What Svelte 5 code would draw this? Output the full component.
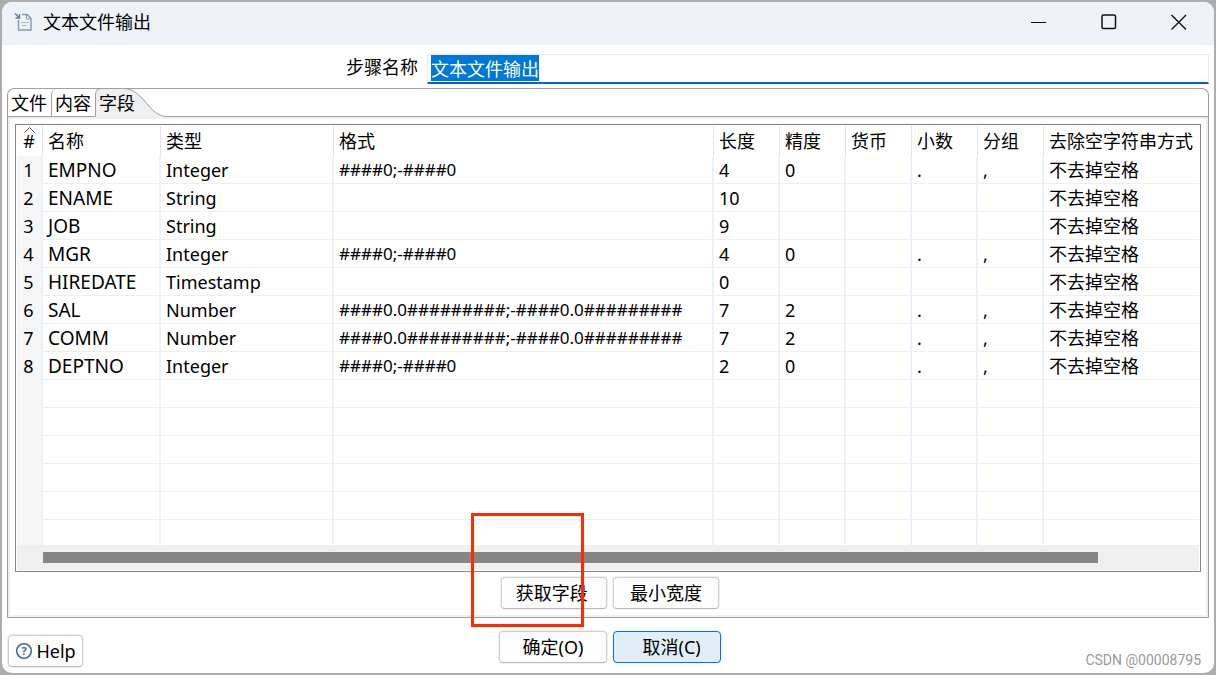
<script>
import { onMount } from 'svelte';

let stepName = '文本文件输出';
let stepInput;
let activeTab = '字段';

const tabs = ['文件', '内容', '字段'];
const columns = ['名称', '类型', '格式', '长度', '精度', '货币', '小数', '分组', '去除空字符串方式'];

const plain = '####0;-####0';
const decimal = '####0.0#########;-####0.0#########';
const keep = '不去掉空格';

let fields = [
  { name: 'EMPNO', type: 'Integer', format: plain, length: 4, precision: '0', dec: '.', group: ',', trim: keep },
  { name: 'ENAME', type: 'String', format: '', length: 10, precision: '', dec: '', group: '', trim: keep },
  { name: 'JOB', type: 'String', format: '', length: 9, precision: '', dec: '', group: '', trim: keep },
  { name: 'MGR', type: 'Integer', format: plain, length: 4, precision: '0', dec: '.', group: ',', trim: keep },
  { name: 'HIREDATE', type: 'Timestamp', format: '', length: 0, precision: '', dec: '', group: '', trim: keep },
  { name: 'SAL', type: 'Number', format: decimal, length: 7, precision: '2', dec: '.', group: ',', trim: keep },
  { name: 'COMM', type: 'Number', format: decimal, length: 7, precision: '2', dec: '.', group: ',', trim: keep },
  { name: 'DEPTNO', type: 'Integer', format: plain, length: 2, precision: '0', dec: '.', group: ',', trim: keep }
];

// blank grid lines under the data
const blankRows = [1, 2, 3, 4, 5, 6];

onMount(() => {
  stepInput.focus();
  stepInput.select();
});
</script>

<main class="dialog">
  <header class="titlebar">
    <svg class="app-icon" width="18" height="20" viewBox="0 0 18 20" fill="none">
      <path d="M1 1.5l4 4M5.5 2v4h-4" stroke="#5a7f9c" stroke-width="1.4" />
      <path d="M8 2.5h5l4 4v11.500h-12.500v-10" stroke="#7d9bb3" stroke-width="1.400" />
      <path d="M12.500 2.500v4.500h4.500" stroke="#7d9bb3" />
      <path d="M7.500 10.500h7M7.500 13.500h5" stroke="#a3b9ca" />
    </svg>
    <h1>文本文件输出</h1>
    <div class="window-buttons">
      <button aria-label="最小化"><svg width="16" height="16" viewBox="0 0 16 16"><path d="M0 8.500h15" /></svg></button>
      <button aria-label="最大化"><svg width="16" height="16" viewBox="0 0 16 16"><rect x="1" y="1" width="13.500" height="13.500" rx="1.500" stroke-width="1.500" /></svg></button>
      <button aria-label="关闭"><svg width="16" height="16" viewBox="0 0 16 16"><path d="M.5 1l14.500 14.500M15 1L.5 15.500" stroke-width="1.400" /></svg></button>
    </div>
  </header>

  <div class="step">
    <label for="step-name">步骤名称</label>
    <input id="step-name" type="text" bind:this={stepInput} bind:value={stepName}>
  </div>

  <section class="folder">
    <div class="tabs" role="tablist">
      {#each tabs as tab}
        <button class="tab" class:active={tab === activeTab} role="tab" aria-selected={tab === activeTab} on:click={() => activeTab = tab}>
          {#if tab === activeTab}
            <svg class="tab-shape" width="72" height="29" viewBox="0 0 72 29">
              <path d="M.5 29V6.500Q.5 .5 6.500 .5H28C40 .5 46 9 53 17C60 25 64 27.500 71 28.500V29Z" fill="#efefef" />
              <path d="M.5 28V6.500Q.5 .5 6.500 .5H28C40 .5 46 9 53 17C60 25 64 27.500 71 28.500" fill="none" stroke="#a0a0a0" />
            </svg>
          {/if}
          <span>{tab}</span>
        </button>
      {/each}
    </div>

    <div class="panel">
      <div class="panel-body">
        <div class="grid-frame">
          <table>
            <colgroup>
              <col class="c-num"><col class="c-name"><col class="c-type"><col class="c-format">
              <col class="c-small"><col class="c-small"><col class="c-small"><col class="c-small"><col class="c-small">
              <col>
            </colgroup>
            <thead>
              <tr>
                <th class="num">
                  <svg class="sort" width="11" height="6" viewBox="0 0 11 6"><path d="M.5 5.500l5-5 5 5" fill="none" stroke="#555" /></svg>
                  #
                </th>
                {#each columns as column}
                  <th>{column}</th>
                {/each}
              </tr>
            </thead>
            <tbody>
              {#each fields as field, i}
                <tr>
                  <td class="num">{i + 1}</td>
                  <td class="name">{field.name}</td>
                  <td>{field.type}</td>
                  <td class="format">{field.format}</td>
                  <td>{field.length}</td>
                  <td>{field.precision}</td>
                  <td></td>
                  <td>{field.dec}</td>
                  <td>{field.group}</td>
                  <td>{field.trim}</td>
                </tr>
              {/each}
              {#each blankRows as row}
                <tr class="blank">
                  <td class="num"></td>
                  {#each columns as column}
                    <td></td>
                  {/each}
                </tr>
              {/each}
            </tbody>
          </table>
          <div class="scrollbar"><div class="thumb"></div></div>
        </div>
        <div class="actions">
          <button class="btn">获取字段&nbsp;</button>
          <button class="btn">最小宽度</button>
        </div>
      </div>
    </div>
  </section>

  <footer>
    <button class="btn help">
      <svg width="18" height="18" viewBox="0 0 18 18">
        <circle cx="9" cy="9" r="7.300" fill="none" stroke="#456a8a" stroke-width="1.600" />
        <text x="9" y="13" text-anchor="middle">?</text>
      </svg>
      Help
    </button>
    <div class="confirm">
      <button class="btn wide">确定(O)</button>
      <button class="btn wide default">&nbsp;&nbsp;取消(C)</button>
    </div>
    <span class="watermark">CSDN @00008795</span>
  </footer>

  <div class="marker"></div>
</main>

<style>
:global(body) {
  background: #adadad;
}

.dialog {
  position: relative;
  margin: 2px;
  padding-bottom: 6px;
  border-radius: 10px;
  background: #fff;
  color: #000;
  font-family: "Noto Sans", "Noto Sans CJK SC", sans-serif;
  font-size: 18px;
  line-height: 24px;
}

button,
input {
  font: inherit;
  color: inherit;
  box-sizing: border-box;
}

/* title bar */

.titlebar {
  display: flex;
  align-items: center;
  height: 40px;
  padding: 0 0 3px 12px;
  border-radius: 10px 10px 0 0;
  background: #eff3f9;
}

h1 {
  flex: 1;
  margin: 0 0 0 11px;
  font-size: 18px;
  font-weight: normal;
}

.window-buttons {
  display: flex;
}

.window-buttons button {
  display: flex;
  align-items: center;
  justify-content: center;
  width: 70px;
  height: 40px;
  padding: 0;
  border: 0;
  background: none;
}

.window-buttons svg {
  fill: none;
  stroke: #111;
}

/* step name */

.step {
  display: flex;
  align-items: center;
  gap: 9px;
  padding: 9px 5px 4px 344px;
}

.step label {
  padding-bottom: 4px;
}

.step input {
  flex: 1;
  min-width: 0;
  height: 30px;
  padding: 0 3px 2px;
  border: 1px solid #e8ecf0;
  border-bottom: 2px solid #0067c0;
  outline: none;
  background: #fff;
}

.step input::selection {
  background: #0078d7;
  color: #fff;
}

/* tab folder */

.folder {
  margin: 0 5px;
}

.tabs {
  display: flex;
  height: 28px;
  border: 1px solid #a0a0a0;
  border-width: 1px 1px 0;
  border-radius: 7px 7px 0 0;
  box-shadow: inset 0 -1px #a0a0a0;
}

.tab {
  width: 43px;
  height: 28px;
  padding: 0 0 0 3px;
  border: 0;
  background: none;
  text-align: left;
}

.tab:nth-child(2) {
  width: 44px;
  margin-top: -1px;
  height: 29px;
  padding-top: 1px;
  border-left: 1px solid #a0a0a0;
  border-radius: 7px 0 0 0;
}

.tab.active {
  position: relative;
  width: 72px;
  padding-left: 4px;
}

.tab-shape {
  position: absolute;
  left: 0;
  top: -1px;
}

.tab span {
  position: relative;
}

.panel {
  padding: 2px;
  border: 1px solid #a0a0a0;
  border-top: 0;
  background: #efefef;
}

.panel-body {
  padding: 5px 5px 6px;
  background: #fff;
}

/* fields grid */

.grid-frame {
  padding: 1px;
  border: 1px solid #828790;
}

table {
  width: 100%;
  table-layout: fixed;
  border-collapse: separate;
  border-spacing: 0;
}

.c-num { width: 26px; }
.c-name { width: 118px; }
.c-type { width: 173px; }
.c-format { width: 380px; }
.c-small { width: 66px; }

th,
td {
  box-sizing: border-box;
  padding: 0 0 0 5px;
  text-align: left;
  font-weight: normal;
  white-space: nowrap;
}

th {
  position: relative;
  height: 30px;
  border-right: 1px solid #e5e5e5;
}

td {
  height: 28px;
  border-right: 2px solid #e9f1fb;
  border-bottom: 1px solid #efefef;
}

th:last-child,
td:last-child {
  border-right: 0;
}

.num {
  padding: 0 1px 0 0;
  text-align: center;
}

td.num {
  background: #f6f6f6;
  border-bottom-color: #f6f6f6;
}

td.name {
  font-size: 19px;
}

td.format {
  font-size: 17px;
}

.sort {
  position: absolute;
  top: 1px;
  left: 7px;
}

.blank:last-child td {
  height: 25px;
  border-bottom: 0;
}

.scrollbar {
  padding: 7px 0;
  background: #efefef;
}

.thumb {
  height: 11px;
  margin: 0 101px 0 26px;
  background: #858585;
}

/* buttons */

.btn {
  width: 106px;
  height: 32px;
  padding: 0;
  border: 1px solid #d0d0d0;
  border-bottom-color: #bbb;
  border-radius: 4px;
  background: #fdfdfd;
  box-shadow: 0 0 0 1px #f0f0f0;
}

.btn.wide {
  width: 108px;
}

.btn.default {
  border-color: #0078d4;
  background: #e0eef9;
}

.actions,
.confirm {
  display: flex;
  justify-content: center;
  gap: 6px;
}

.actions {
  padding-top: 5px;
  padding-left: 4px;
}

footer {
  display: grid;
  grid-template-columns: 1fr auto 1fr;
  padding: 13px 4px 0 6px;
}

.confirm {
  padding-left: 2px;
}

.help {
  display: flex;
  align-items: center;
  justify-content: center;
  gap: 3px;
  width: 75px;
  margin-top: 4px;
}

.help text {
  fill: #456a8a;
  font-size: 11px;
  font-weight: bold;
}

.watermark {
  align-self: end;
  justify-self: end;
  padding-right: 9px;
  color: #999;
  font-family: Roboto, sans-serif;
  font-size: 14px;
  line-height: 14px;
}

/* red callout round the get-fields button */

.marker {
  position: absolute;
  top: 511px;
  left: calc(50% - 137px);
  box-sizing: border-box;
  width: 113px;
  height: 114px;
  border: 3px solid #ff2a00;
  pointer-events: none;
}
</style>
